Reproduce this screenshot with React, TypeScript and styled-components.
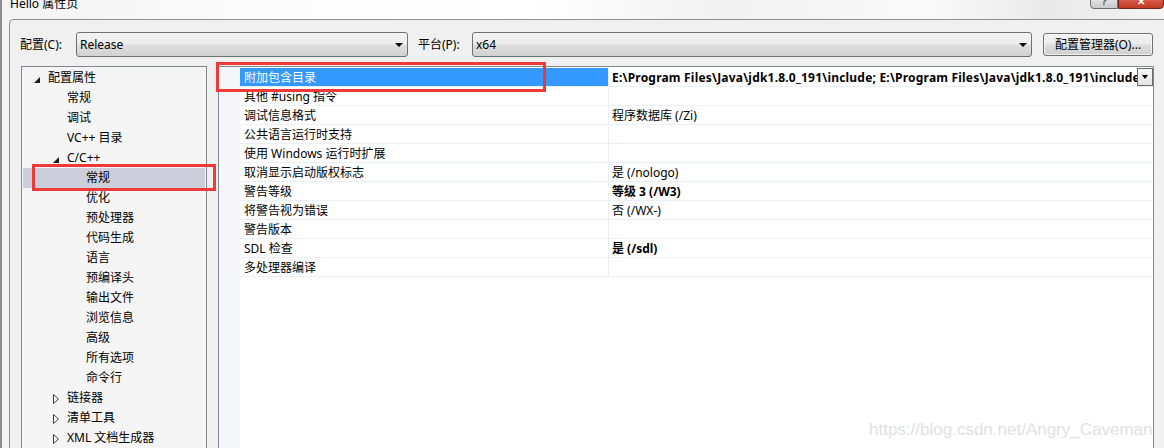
import React from "react";
import styled, { createGlobalStyle } from "styled-components";

const GlobalStyle = createGlobalStyle`
  html, body { margin: 0; padding: 0; background: #f0f0f0; }
  body {
    font-family: "Noto Sans", "Noto Sans CJK SC", sans-serif;
    font-size: 12px;
    color: #000;
  }
  * { box-sizing: border-box; }
`;

const Window = styled.div`
  position: relative;
  width: 1164px;
  height: 448px;
  overflow: hidden;
  display: flex;
  flex-direction: column;
  border-left: 2px solid #8c8c8c;
  background: linear-gradient(
    90deg,
    #f3f3f3 0%,
    #fbfbfb 20%,
    #ffffff 45%,
    #f2f2f2 62%,
    #fafafa 80%,
    #e9e9e9 90%,
    #f4f4f4 100%
  );
`;

const TitleBar = styled.div`
  height: 19px;
  flex: none;
  display: flex;
  align-items: flex-start;
  padding-left: 8px;
`;

const TitleText = styled.span`
  font-size: 12px;
  line-height: 12px;
  margin-top: -2px;
  color: #000;
`;

const CaptionButtons = styled.div`
  margin-left: auto;
  display: flex;
  margin-top: -6px;
`;

const CaptionButton = styled.div<{ $close?: boolean }>`
  width: ${(p) => (p.$close ? 46 : 28)}px;
  height: 15px;
  border: 1px solid ${(p) => (p.$close ? "#6d2a23" : "#6c6c6c")};
  border-radius: ${(p) => (p.$close ? "0 0 4px 0" : "0 0 0 4px")};
  background: ${(p) =>
    p.$close
      ? "linear-gradient(#e89a88, #d0533f 50%, #c23a27)"
      : "linear-gradient(#f4f4f4, #dcdcdc 50%, #c9c9c9)"};
  display: flex;
  align-items: flex-end;
  justify-content: center;
  color: ${(p) => (p.$close ? "#fff" : "#555")};
  font-family: "Liberation Sans", sans-serif;
  font-weight: bold;
  font-size: 10px;
  line-height: 10px;
  padding-bottom: 1px;
`;

const Frame = styled.div`
  flex: 1;
  margin-left: 7px;
  border-left: 1px solid #8e8f8f;
  border-top: 1px solid #8e8f8f;
  border-top-left-radius: 5px;
  background: #f0f0f0;
  display: flex;
  flex-direction: column;
  min-height: 0;
`;

const ConfigRow = styled.div`
  height: 46px;
  flex: none;
  display: flex;
  align-items: flex-start;
  padding: 12px 0 0 10px;
`;

const FieldLabel = styled.div<{ $w: number; $ml?: number }>`
  width: ${(p) => p.$w}px;
  margin-left: ${(p) => p.$ml ?? 0}px;
  height: 25px;
  display: flex;
  align-items: center;
  line-height: 14px;
`;

const Combo = styled.div<{ $w: number }>`
  width: ${(p) => p.$w}px;
  height: 25px;
  border: 1px solid #707070;
  border-radius: 3px;
  background: linear-gradient(#f3f3f3 0%, #ececec 48%, #dedede 52%, #d2d2d2 100%);
  display: flex;
  align-items: center;
  padding: 0 4px 0 3px;
  line-height: 14px;
`;

const ComboText = styled.span`
  flex: 1;
`;

const ArrowDown = styled.span`
  width: 0;
  height: 0;
  border-left: 4px solid transparent;
  border-right: 4px solid transparent;
  border-top: 4px solid #000;
  margin-top: 1px;
`;

const Button = styled.div`
  width: 110px;
  height: 23px;
  margin-left: 11px;
  margin-top: 1px;
  border: 1px solid #707070;
  border-radius: 3px;
  background: linear-gradient(#f2f2f2 0%, #ebebeb 48%, #dddddd 52%, #cfcfcf 100%);
  display: flex;
  align-items: center;
  justify-content: center;
  line-height: 14px;
  box-shadow: inset 0 0 0 1px rgba(255, 255, 255, 0.7);
`;

const Panels = styled.div`
  flex: 1;
  display: flex;
  padding-left: 11px;
  gap: 11px;
  min-height: 0;
`;

const Tree = styled.div`
  width: 186px;
  flex: none;
  border: 1px solid #828790;
  border-bottom: none;
  background: #f5f5f5;
  display: flex;
  flex-direction: column;
  padding-top: 1px;
`;

const TreeRow = styled.div<{ $level: number; $selected?: boolean }>`
  height: 20px;
  flex: none;
  display: flex;
  align-items: center;
  padding-left: ${(p) => 11 + p.$level * 19}px;
  margin: 0 1px;
  background: ${(p) => (p.$selected ? "#cccedb" : "transparent")};
  line-height: 14px;
  white-space: nowrap;
`;

const ArrowBox = styled.span`
  width: 14px;
  height: 20px;
  flex: none;
  display: flex;
  align-items: center;
`;

const Grid = styled.div`
  width: 936px;
  flex: none;
  border: 1px solid #828790;
  border-bottom: none;
  background: #fff;
  display: flex;
`;

const Gutter = styled.div`
  width: 21px;
  flex: none;
  background: #f4f6f9;
`;

const GridBody = styled.div`
  flex: 1;
  display: flex;
  flex-direction: column;
  min-width: 0;
  padding-top: 1px;
`;

const PropRow = styled.div`
  height: 19px;
  flex: none;
  display: flex;
  border-bottom: 1px solid #ebf0f7;
`;

const NameCell = styled.div<{ $active?: boolean }>`
  width: 369px;
  flex: none;
  border-right: 1px solid #ebf0f7;
  background: ${(p) => (p.$active ? "#3399ff" : "transparent")};
  color: ${(p) => (p.$active ? "#fff" : "#000")};
  padding: 2px 0 0 4px;
  display: flex;
  align-items: center;
  line-height: 14px;
  white-space: nowrap;
`;

const ValueCell = styled.div<{ $bold?: boolean }>`
  flex: 1;
  min-width: 0;
  display: flex;
  align-items: center;
  padding-left: 3px;
  font-weight: ${(p) => (p.$bold ? 700 : 400)};
  line-height: 14px;
  white-space: nowrap;
`;

const ValueText = styled.span<{ $wide?: boolean }>`
  flex: 1;
  overflow: hidden;
  padding-top: 2px;
  letter-spacing: ${(p) => (p.$wide ? "0.2px" : "0")};
`;

const DropButton = styled.div`
  width: 16px;
  height: 18px;
  flex: none;
  border: 1px solid #6a6a6a;
  background: linear-gradient(#f7f7f7, #e4e4e4);
  display: flex;
  align-items: center;
  justify-content: center;
  margin-top: 0;
  align-self: flex-start;
`;

const SmallArrow = styled.span`
  width: 0;
  height: 0;
  border-left: 3.5px solid transparent;
  border-right: 3.5px solid transparent;
  border-top: 4px solid #000;
`;

const Annotation = styled.div`
  position: absolute;
  border: 3px solid #ef3838;
  pointer-events: none;
`;

const Watermark = styled.div`
  position: absolute;
  left: 867px;
  top: 420px;
  font-family: "Liberation Sans", Arial, sans-serif;
  font-size: 17px;
  color: #e1e1e1;
  white-space: nowrap;
  pointer-events: none;
`;

type TreeItem = {
  label: string;
  level: number;
  arrow?: "open" | "closed";
  selected?: boolean;
};

const treeItems: TreeItem[] = [
  { label: "配置属性", level: 0, arrow: "open" },
  { label: "常规", level: 1 },
  { label: "调试", level: 1 },
  { label: "VC++ 目录", level: 1 },
  { label: "C/C++", level: 1, arrow: "open" },
  { label: "常规", level: 2, selected: true },
  { label: "优化", level: 2 },
  { label: "预处理器", level: 2 },
  { label: "代码生成", level: 2 },
  { label: "语言", level: 2 },
  { label: "预编译头", level: 2 },
  { label: "输出文件", level: 2 },
  { label: "浏览信息", level: 2 },
  { label: "高级", level: 2 },
  { label: "所有选项", level: 2 },
  { label: "命令行", level: 2 },
  { label: "链接器", level: 1, arrow: "closed" },
  { label: "清单工具", level: 1, arrow: "closed" },
  { label: "XML 文档生成器", level: 1, arrow: "closed" },
];

type Prop = { name: string; value?: string; bold?: boolean; active?: boolean };

const props: Prop[] = [
  {
    name: "附加包含目录",
    value:
      "E:\\Program Files\\Java\\jdk1.8.0_191\\include; E:\\Program Files\\Java\\jdk1.8.0_191\\include",
    bold: true,
    active: true,
  },
  { name: "其他 #using 指令" },
  { name: "调试信息格式", value: "程序数据库 (/Zi)" },
  { name: "公共语言运行时支持" },
  { name: "使用 Windows 运行时扩展" },
  { name: "取消显示启动版权标志", value: "是 (/nologo)" },
  { name: "警告等级", value: "等级 3 (/W3)", bold: true },
  { name: "将警告视为错误", value: "否 (/WX-)" },
  { name: "警告版本" },
  { name: "SDL 检查", value: "是 (/sdl)", bold: true },
  { name: "多处理器编译" },
];

const OpenArrow = () => (
  <svg width="6" height="6" viewBox="0 0 6 6" style={{ marginTop: 3 }}>
    <polygon points="6,0 6,6 0,6" fill="#1e1e1e" />
  </svg>
);

const ClosedArrow = () => (
  <svg width="7" height="10" viewBox="0 0 7 10" style={{ marginTop: 2 }}>
    <polygon points="0.5,0.5 5.5,5 0.5,9.5" fill="#fff" stroke="#3c3c3c" strokeWidth="1" />
  </svg>
);

export default function App() {
  return (
    <>
      <GlobalStyle />
      <Window>
        <TitleBar>
          <TitleText>Hello 属性页</TitleText>
          <CaptionButtons>
            <CaptionButton>?</CaptionButton>
            <CaptionButton $close>✕</CaptionButton>
          </CaptionButtons>
        </TitleBar>
        <Frame>
          <ConfigRow>
            <FieldLabel $w={56}>配置(C):</FieldLabel>
            <Combo $w={332}>
              <ComboText>Release</ComboText>
              <ArrowDown />
            </Combo>
            <FieldLabel $w={54} $ml={10}>
              平台(P):
            </FieldLabel>
            <Combo $w={560}>
              <ComboText>x64</ComboText>
              <ArrowDown />
            </Combo>
            <Button>配置管理器(O)...</Button>
          </ConfigRow>
          <Panels>
            <Tree>
              {treeItems.map((t, i) => (
                <TreeRow key={i} $level={t.level} $selected={t.selected}>
                  <ArrowBox>
                    {t.arrow === "open" && <OpenArrow />}
                    {t.arrow === "closed" && <ClosedArrow />}
                  </ArrowBox>
                  {t.label}
                </TreeRow>
              ))}
            </Tree>
            <Grid>
              <Gutter />
              <GridBody>
                {props.map((p, i) => (
                  <PropRow key={i}>
                    <NameCell $active={p.active}>{p.name}</NameCell>
                    <ValueCell $bold={p.bold}>
                      <ValueText $wide={p.active}>{p.value ?? ""}</ValueText>
                      {p.active && (
                        <DropButton>
                          <SmallArrow />
                        </DropButton>
                      )}
                    </ValueCell>
                  </PropRow>
                ))}
              </GridBody>
            </Grid>
          </Panels>
        </Frame>
        <Annotation style={{ left: 30, top: 164, width: 184, height: 27 }} />
        <Annotation style={{ left: 214, top: 62, width: 330, height: 30 }} />
        <Watermark>https://blog.csdn.net/Angry_Caveman</Watermark>
      </Window>
    </>
  );
}
